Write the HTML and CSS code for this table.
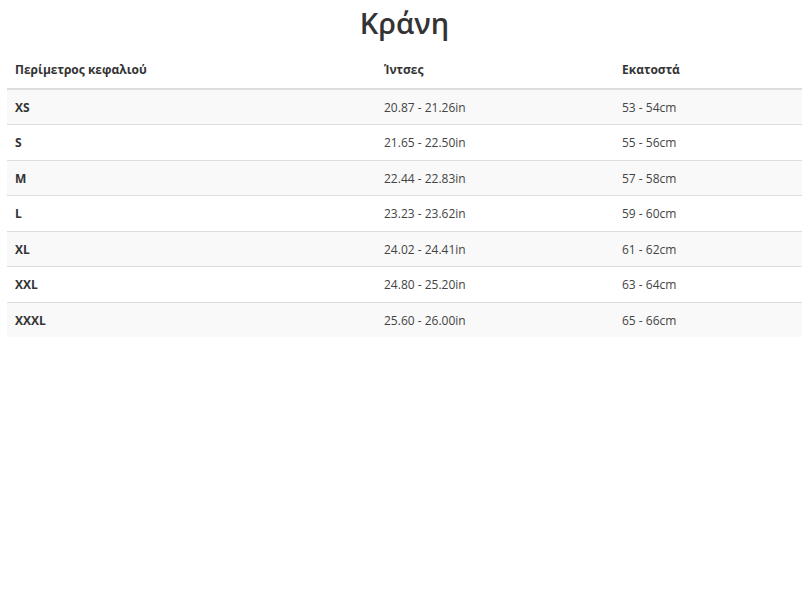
FILE: index.html
```html
<!DOCTYPE html>
<html lang="el">
<head>
<meta charset="utf-8">
<link rel="stylesheet" href="styles.css">
</head>
<body>
<div class="page">
  <h2 class="title">Κράνη</h2>
  <table class="size-table">
    <thead>
      <tr><th class="c1">Περίμετρος κεφαλιού</th><th class="c2">Ίντσες</th><th class="c3">Εκατοστά</th></tr>
    </thead>
    <tbody>
      <tr><td class="size">XS</td><td>20.87 - 21.26in</td><td>53 - 54cm</td></tr>
      <tr><td class="size">S</td><td>21.65 - 22.50in</td><td>55 - 56cm</td></tr>
      <tr><td class="size">M</td><td>22.44 - 22.83in</td><td>57 - 58cm</td></tr>
      <tr><td class="size">L</td><td>23.23 - 23.62in</td><td>59 - 60cm</td></tr>
      <tr><td class="size">XL</td><td>24.02 - 24.41in</td><td>61 - 62cm</td></tr>
      <tr><td class="size">XXL</td><td>24.80 - 25.20in</td><td>63 - 64cm</td></tr>
      <tr><td class="size">XXXL</td><td>25.60 - 26.00in</td><td>65 - 66cm</td></tr>
    </tbody>
  </table>
</div>
</body>
</html>
```
FILE: styles.css
```css
html, body {
  margin: 0;
  padding: 0;
  background: #fff;
}
body {
  font-family: "Open Sans", "Noto Sans", sans-serif;
  color: #333;
}
.page {
  padding: 0 8px 0 7px;
}
.title {
  margin: 0;
  padding-top: 3px;
  height: 50px;
  text-align: center;
  font-size: 29px;
  font-weight: 600;
  line-height: 40px;
  color: #333;
}
.size-table {
  width: 100%;
  border-collapse: collapse;
  border-spacing: 0;
  font-size: 12px;
}
.size-table th,
.size-table td {
  padding: 8px;
  line-height: 18.5px;
  text-align: left;
  vertical-align: top;
}
.size-table th {
  font-weight: 700;
  border-bottom: 2px solid #ddd;
  color: #333;
}
.size-table td {
  border-top: 1px solid #ddd;
  color: #444;
  padding-top: 9px;
  padding-bottom: 7px;
}
.size-table tbody tr:first-child td {
  border-top: 0;
}
.size-table tbody tr:nth-child(odd) {
  background: #f9f9f9;
}
.size-table .c1 { width: 353px; }
.size-table .c2 { width: 222px; }
.size-table td.size {
  font-weight: 700;
  color: #333;
}
```
